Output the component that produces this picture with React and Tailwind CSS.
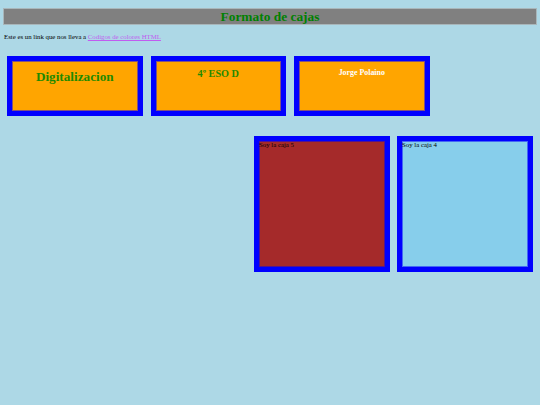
export default function App() {
  const serif = { fontFamily: '"Liberation Serif", "Times New Roman", serif' };
  return (
    <div
      className="w-full min-h-[405px] bg-[#add8e6] px-[3px] pt-[8px] text-black"
      style={serif}
    >
      <div className="h-[17px] border border-[#a9b6ba] bg-[#808080] flex items-center justify-center">
        <span className="text-[13.4px] leading-none font-bold text-[#008000]">Formato de cajas</span>
      </div>

      <p className="mt-[8px] text-[6.8px] leading-[8px] pl-[1px]">
        Este es un link que nos lleva a{" "}
        <a href="#" className="text-[#c05cf0] underline">Codigos de colores HTML</a>
      </p>

      <div className="mt-[15px] ml-[4px] flex gap-[8px]">
        <div className="w-[135.5px] h-[60px] border-[5px] border-[#0000ff] bg-[#ffa500] shadow-[inset_0_0_0_1px_#80537f] flex justify-center pt-[8px]">
          <span className="text-[13.2px] leading-[16px] font-bold text-[#1f8a00]">Digitalizacion</span>
        </div>
        <div className="w-[135.5px] h-[60px] border-[5px] border-[#0000ff] bg-[#ffa500] shadow-[inset_0_0_0_1px_#80537f] flex justify-center pt-[7px]">
          <span className="text-[10.2px] leading-[12px] font-bold text-[#1f8a00]">4º ESO D</span>
        </div>
        <div className="w-[135.5px] h-[60px] border-[5px] border-[#0000ff] bg-[#ffa500] shadow-[inset_0_0_0_1px_#80537f] flex justify-center pt-[7px]">
          <span className="text-[7.9px] leading-[10px] font-bold text-white">Jorge Polaino</span>
        </div>
      </div>

      <div className="mt-[20px] mr-[4px] flex justify-end gap-[7px]">
        <div className="w-[136px] h-[136px] border-[5px] border-[#0000ff] bg-[#a52a2a] shadow-[inset_0_0_0_1px_#52158f]">
          <div className="text-[6.8px] leading-[8px]">Soy la caja 5</div>
        </div>
        <div className="w-[136px] h-[136px] border-[5px] border-[#0000ff] bg-[#87ceeb] shadow-[inset_0_0_0_1px_#4467f5]">
          <div className="text-[6.8px] leading-[8px]">Soy la caja 4</div>
        </div>
      </div>
    </div>
  );
}
